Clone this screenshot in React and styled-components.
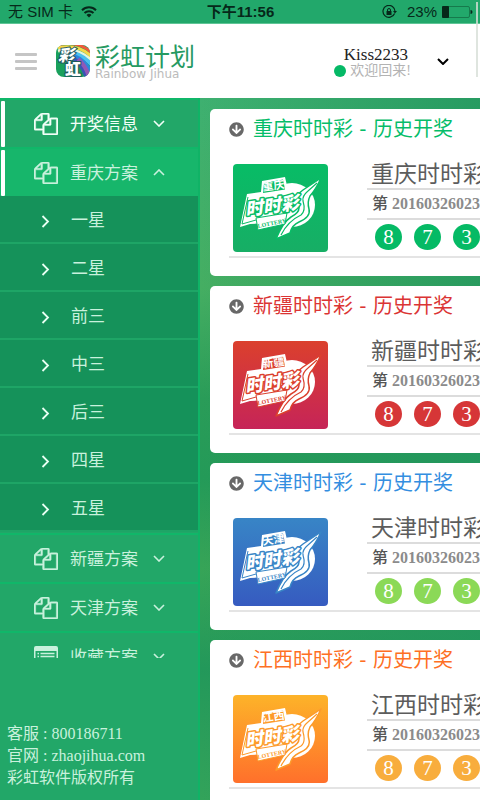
import React from "react";
import styled, { createGlobalStyle } from "styled-components";
import { FaArrowCircleDown } from "react-icons/fa";

const GlobalStyle = createGlobalStyle`
  * { box-sizing: border-box; }
  body {
    margin: 0;
    font-family: "Liberation Serif", "Noto Sans CJK SC", serif;
    -webkit-font-smoothing: antialiased;
  }
  button { font: inherit; color: inherit; background: none; border: 0; padding: 0; cursor: pointer; }
  h2, h3, p, ul { margin: 0; padding: 0; font-weight: 400; }
  ul { list-style: none; }
  a { color: inherit; text-decoration: none; }
  svg { display: block; flex: none; }
`;

const Screen = styled.div`
  position: relative;
  display: flex;
  flex-direction: column;
  height: 100vh;
  overflow: hidden;
  background: #fff;
`;

const ScrollThumb = styled.div`
  position: absolute;
  top: 2px;
  right: 2px;
  width: 2px;
  height: 75px;
  background: rgba(215, 222, 215, 0.8);
`;

const StatusBar = styled.div`
  display: grid;
  grid-template-columns: 1fr auto 1fr;
  align-items: center;
  flex: none;
  height: 24px;
  padding: 0 7px 0 8px;
  background: #22a86b;
  border-bottom: 1px solid #5fc596;
  color: #06281a;
  font-family: "Liberation Sans", "Noto Sans CJK SC", sans-serif;
  font-size: 15px;
  line-height: 23px;
  white-space: nowrap;
`;

const StatusGroup = styled.div`
  display: flex;
  align-items: center;
  gap: ${(p) => (p.$end ? "5px" : "8px")};
  justify-content: ${(p) => (p.$end ? "flex-end" : "flex-start")};
`;

const Percent = styled.span`
  padding-left: 5px;
`;

const Clock = styled.div`
  font-weight: 700;
`;

const Header = styled.header`
  display: flex;
  align-items: center;
  flex: none;
  height: 74px;
  padding: 0 31px 0 15px;
  background: #fff;
`;

const MenuButton = styled.button`
  display: flex;
  flex-direction: column;
  gap: 4px;
  width: 22px;
  margin-right: 19px;
`;

const MenuBar = styled.span`
  height: 3px;
  border-radius: 1px;
  background: #c5c5c5;
`;

const Brand = styled.a`
  display: flex;
  align-items: center;
  gap: 5px;
  margin-right: auto;
`;

const BrandText = styled.span`
  display: flex;
  flex-direction: column;
  color: #269a62;
  font-family: "Noto Sans CJK SC", sans-serif;
  font-size: 25px;
  line-height: 26px;
  white-space: nowrap;
`;

const BrandSub = styled.span`
  color: #bbb;
  font-family: "DejaVu Sans", sans-serif;
  font-size: 12px;
  line-height: 12px;
`;

const UserButton = styled.button`
  display: flex;
  align-items: center;
  gap: 26px;
`;

const UserInfo = styled.span`
  display: flex;
  flex-direction: column;
  align-items: flex-end;
  padding-top: 3px;
`;

const UserName = styled.span`
  padding-right: 3px;
  color: #222;
  font-size: 17px;
  line-height: 17px;
`;

const Welcome = styled.span`
  display: flex;
  align-items: center;
  gap: 4px;
  color: #b3b3b3;
  font-size: 14px;
  line-height: 16px;
`;

const Dot = styled.span`
  width: 12px;
  height: 12px;
  border-radius: 50%;
  background: #05b966;
`;

const Body = styled.div`
  display: flex;
  flex: 1;
  min-height: 0;
`;

const Sidebar = styled.aside`
  display: flex;
  flex-direction: column;
  flex: none;
  width: 200px;
  border-right: 2px solid #10b366;
  background: #22a768;
  color: #d8f6e7;
  font-size: 17px;
`;

const Nav = styled.nav`
  flex: 1;
  min-height: 0;
  overflow: hidden;
`;

const NavItem = styled.button`
  display: flex;
  align-items: center;
  width: 100%;
  height: 49px;
  padding: 0 33px 0 1px;
  border-top: 2px solid #10b769;
  background: ${(p) => (p.$open ? "#17b66b" : "transparent")};
  color: ${(p) => (p.$bright ? "#f2fff8" : "#c9f1dd")};
`;

const Marker = styled.span`
  width: 4px;
  height: 46px;
  margin-right: 29px;
  border-radius: 1px;
  background: ${(p) => (p.$on ? "#fff" : "transparent")};
`;

const NavLabel = styled.span`
  margin: 0 auto 0 12px;
  padding-top: 2px;
  line-height: 24px;
`;

const SubList = styled.ul`
  border-bottom: 1px solid #22a768;
`;

const SubItem = styled.button`
  display: flex;
  align-items: center;
  gap: 21px;
  width: 100%;
  height: 48px;
  padding: 4px 0 0 41px;
  border-bottom: 2px solid #1ea566;
  background: #15925a;
  color: #c9f1dd;
  line-height: 24px;
`;

const Contact = styled.footer`
  flex: none;
  padding: 65px 0 11px 7px;
  height: 142px;
  color: #c9f1dd;
  font-size: 16px;
  line-height: 22px;
`;

const Main = styled.main`
  display: flex;
  flex-direction: column;
  flex: 1;
  gap: 10px;
  min-width: 0;
  padding: 11px 0 0 10px;
  overflow: hidden;
  background:
    linear-gradient(90deg, rgba(34, 150, 94, 0) 0, rgba(34, 150, 94, 0.8) 100%),
    linear-gradient(180deg, #3eb070 0, #45ae62 190px, #2a9c58 300px, #249a58 380px, #37a457 470px, #23985a 570px, #33a35a 702px);
`;

const Card = styled.section`
  display: flex;
  flex-direction: column;
  flex: none;
  height: 167px;
  padding: 5px 0 18px 19px;
  border-radius: 5px 0 0 5px;
  background: #fff;
  white-space: nowrap;
`;

const CardTitle = styled.h2`
  display: flex;
  align-items: center;
  gap: 9px;
  color: ${(p) => p.$color};
  font-family: "DejaVu Sans", "Noto Sans CJK SC", sans-serif;
  font-size: 20px;
  line-height: 30px;
`;

const CardBody = styled.div`
  display: flex;
  gap: 39px;
  flex: 1;
  padding: 20px 0 0 4px;
  border-bottom: 2px solid #e4e4e4;
`;

const Tile = styled.div`
  flex: none;
  width: 95px;
  height: 88px;
  border-radius: 4px;
  overflow: hidden;
  background: linear-gradient(${(p) => p.$from}, ${(p) => p.$to});
`;

const Info = styled.div`
  flex: 1;
`;

const Name = styled.h3`
  height: 26px;
  padding-left: 4px;
  border-bottom: 2px solid #dcdcdc;
  color: #5c5c5c;
  font-size: 23px;
  line-height: 22px;
`;

const Period = styled.p`
  height: 30px;
  padding-left: 5px;
  border-bottom: 2px solid #dcdcdc;
  color: #8b8b8b;
  font-size: 16px;
  font-weight: 700;
  line-height: 28px;
`;

const PeriodWord = styled.span`
  color: #555;
  font-weight: 500;
`;

const Balls = styled.div`
  display: flex;
  gap: 12px;
  padding: 4px 0 0 8px;
`;

const Ball = styled.span`
  flex: none;
  width: 27px;
  height: 26px;
  border-radius: 50%;
  background: ${(p) => p.$color};
  color: #fff;
  font-size: 21px;
  line-height: 27px;
  text-align: center;
`;

const Chevron = ({ dir = "down", stroke = 1.6 }) => (
  <svg width="12" height="7" viewBox="0 0 12 7" fill="none" stroke="currentColor" strokeWidth={stroke}>
    <path d={dir === "up" ? "M1 6 6 1l5 5" : "M1 1l5 5 5-5"} />
  </svg>
);

const ChevronRight = () => (
  <svg width="9" height="13" viewBox="0 0 9 13" fill="none" stroke="#e8fff3" strokeWidth="1.800">
    <path d="M1.500 1l5.500 5.500L1.500 12" />
  </svg>
);

const FilesIcon = () => (
  <svg width="24" height="22" viewBox="0 0 1792 1792" preserveAspectRatio="none" fill="currentColor" stroke="currentColor" strokeWidth="30">
    <path d="M1696 384q40 0 68 28t28 68v1216q0 40-28 68t-68 28h-960q-40 0-68-28t-28-68v-288h-544q-40 0-68-28t-28-68v-672q0-40 20-88t48-76l408-408q28-28 76-48t88-20h416q40 0 68 28t28 68v328q68-40 128-40h416zm-544 213l-299 299h299v-299zm-640-384l-299 299h299v-299zm196 647l316-316v-416h-384v416q0 40-28 68t-68 28h-416v640h512v-256q0-40 20-88t48-76zm956 804v-1152h-384v416q0 40-28 68t-68 28h-416v640h896z" />
  </svg>
);

const ListIcon = () => (
  <svg width="24" height="22" viewBox="0 0 24 22">
    <path fill="currentColor" fillRule="evenodd" d="M2 0h20a2 2 0 0 1 2 2v18a2 2 0 0 1-2 2H2a2 2 0 0 1-2-2V2a2 2 0 0 1 2-2zM1.500 5v15h21V5z" />
    <path stroke="currentColor" strokeWidth="1.400" d="M3.500 7.500H5M6.500 7.500h14M3.500 10.500H5M6.500 10.500h14M3.500 13.500H5M6.500 13.500h14M3.500 16.500H5M6.500 16.500h14" />
  </svg>
);

const WifiIcon = () => (
  <svg width="16" height="12" viewBox="0 0 16 12" fill="none" stroke="#06281a" strokeWidth="2">
    <path d="M1 4.200a10 10 0 0 1 14 0M3.500 7a6.500 6.500 0 0 1 9 0" />
    <path d="M5.500 9a3.600 3.600 0 0 1 5 0L8 11.600z" fill="#06281a" stroke="none" />
  </svg>
);

const LockIcon = () => (
  <svg width="15" height="14" viewBox="0 0 15 14" fill="none" stroke="#06281a">
    <path d="M12.600 8.500A6 6 0 1 1 13 6.500" strokeWidth="1.200" />
    <path d="M11 6h4l-2 2.500z" fill="#06281a" stroke="none" />
    <rect x="4.500" y="6" width="5" height="4" fill="#06281a" stroke="none" />
    <path d="M5.500 6V5a1.500 1.500 0 0 1 3 0v1" />
  </svg>
);

const BatteryIcon = () => (
  <svg width="31" height="12" viewBox="0 0 31 12">
    <rect x="0.500" y="0.500" width="27" height="11" rx="1.500" fill="none" stroke="#167a4c" />
    <rect x="0" y="0" width="7" height="12" rx="1" fill="#06281a" />
    <path d="M28.500 4q2 0 2 2t-2 2z" fill="#06281a" />
  </svg>
);

const AppIcon = () => (
  <svg width="34" height="32" viewBox="0 0 34 32">
    <defs>
      <clipPath id="appClip"><rect width="34" height="32" rx="8" /></clipPath>
    </defs>
    <g clipPath="url(#appClip)">
      <rect width="34" height="32" fill="#19a05c" />
      <g fill="none" strokeWidth="3">
        <path d="M2 0Q22-5 36 8" stroke="#ef5a3c" />
        <path d="M2 3Q22-2 36 12" stroke="#f8d84a" />
        <path d="M2 6Q21 1 36 16" stroke="#e9f6dc" />
        <path d="M8 8Q22 5 36 20" stroke="#4cc0ee" strokeWidth="4" />
        <path d="M12 11Q24 10 34 26" stroke="#2f86dd" strokeWidth="5" />
        <path d="M18 14Q26 18 31 34" stroke="#3a55b5" strokeWidth="4" />
        <path d="M22 14Q30 21 33 32" stroke="#9158b6" strokeWidth="4" />
      </g>
    </g>
    <g fontFamily="Noto Sans CJK SC, sans-serif" fontWeight="900" fill="#fff" stroke="#1f5a5c" strokeWidth="2" paintOrder="stroke">
      <text x="2" y="16" fontSize="16" fontStyle="italic">彩</text>
      <text x="9" y="30" fontSize="16">虹</text>
    </g>
  </svg>
);

const LotteryMark = ({ region, color }) => (
  <svg width="95" height="88" viewBox="0 0 95 88">
    <ellipse cx="59" cy="41" rx="23" ry="22" fill="#fff" />
    <path fill="#fff" d="M14 30 28 28 29 17 52 13l3 13 14 3-4 28-48 3-10 3z" />
    <path fill={color} d="M31 19 50 15.500l2 10L30 29z" />
    <path fill="none" stroke={color} d="M15 33l-6 27 14-4" />
    <g stroke={color} strokeLinejoin="round">
      <path fill="#fff" strokeWidth="1.500" d="M88 14 70 26q-6 4-5 9t1 9q0 5-8 9-8 5-15 22l14-6q2-8 9-11 12-5 10-13-2-7 1-13 6-7 11-18z" />
      <path fill="none" strokeWidth="1.200" d="M84 19 75 27q-6 5-5 10 3 10-2 14-13 6-20 20" />
      <path fill="#fff" d="m23 54 31-5-2 11-27 6z" />
    </g>
    <g fontFamily="Noto Sans CJK SC, sans-serif" fontWeight="900" fill="#fff">
      <text x="30" y="27" fontSize="11" fontWeight="700" transform="rotate(-8 30 27)">{region}</text>
      <text x="13" y="52" fontSize="18" fontStyle="italic" stroke={color} strokeWidth="3" strokeLinejoin="round" paintOrder="stroke" transform="rotate(-8 13 52)">时时彩</text>
      <text x="25" y="64" fontSize="6" fontFamily="Liberation Serif, serif" fill={color} transform="rotate(-11 25 64)">LOTTERY</text>
    </g>
  </svg>
);

const stars = ["一星", "二星", "前三", "中三", "后三", "四星", "五星"];

const lotteries = [
  { region: "重庆", color: "#05bd69", ball: "#05ba65", from: "#08bc66", to: "#17ae65" },
  { region: "新疆", color: "#db3434", ball: "#d63637", from: "#db402d", to: "#c62458" },
  { region: "天津", color: "#338ee0", ball: "#8bd957", from: "#3885c6", to: "#365bc0" },
  { region: "江西", color: "#fe6f24", ball: "#f8ad3d", from: "#fdb329", to: "#ff702b", mark: "#fd9a2a" },
];

const MenuEntry = ({ label, icon, marked, bright, open }) => (
  <NavItem type="button" $open={open} $bright={bright} aria-expanded={!!open}>
    <Marker $on={marked} />
    {icon || <FilesIcon />}
    <NavLabel>{label}</NavLabel>
    <Chevron dir={open ? "up" : "down"} />
  </NavItem>
);

const LotteryCard = ({ lottery }) => {
  const title = `${lottery.region}时时彩`;
  return (
    <Card>
      <CardTitle $color={lottery.color}>
        <FaArrowCircleDown size={15} color="#686868" />
        {title} - 历史开奖
      </CardTitle>
      <CardBody>
        <Tile $from={lottery.from} $to={lottery.to}>
          <LotteryMark region={lottery.region} color={lottery.mark || lottery.from} />
        </Tile>
        <Info>
          <Name>{title}</Name>
          <Period><PeriodWord>第</PeriodWord> 20160326023</Period>
          <Balls>
            {[8, 7, 3].map((n) => <Ball key={n} $color={lottery.ball}>{n}</Ball>)}
          </Balls>
        </Info>
      </CardBody>
    </Card>
  );
};

export default function App() {
  return (
    <Screen>
      <GlobalStyle />
      <StatusBar>
        <StatusGroup>无 SIM 卡 <WifiIcon /></StatusGroup>
        <Clock>下午11:56</Clock>
        <StatusGroup $end>
          <LockIcon />
          <Percent>23%</Percent>
          <BatteryIcon />
        </StatusGroup>
      </StatusBar>
      <Header>
        <MenuButton type="button" aria-label="菜单"><MenuBar /><MenuBar /><MenuBar /></MenuButton>
        <Brand href="#">
          <AppIcon />
          <BrandText>彩虹计划<BrandSub>Rainbow Jihua</BrandSub></BrandText>
        </Brand>
        <UserButton type="button">
          <UserInfo>
            <UserName>Kiss2233</UserName>
            <Welcome><Dot />欢迎回来!</Welcome>
          </UserInfo>
          <Chevron stroke={2} />
        </UserButton>
      </Header>
      <Body>
        <Sidebar>
          <Nav>
            <MenuEntry label="开奖信息" marked bright />
            <MenuEntry label="重庆方案" marked open />
            <SubList>
              {stars.map((s) => (
                <li key={s}><SubItem type="button"><ChevronRight />{s}</SubItem></li>
              ))}
            </SubList>
            <MenuEntry label="新疆方案" />
            <MenuEntry label="天津方案" />
            <MenuEntry label="收藏方案" icon={<ListIcon />} />
          </Nav>
          <Contact>
            <p>客服 : 800186711</p>
            <p>官网 : <a href="#">zhaojihua.com</a></p>
            <p>彩虹软件版权所有</p>
          </Contact>
        </Sidebar>
        <Main>
          {lotteries.map((l) => <LotteryCard key={l.region} lottery={l} />)}
        </Main>
      </Body>
      <ScrollThumb />
    </Screen>
  );
}
